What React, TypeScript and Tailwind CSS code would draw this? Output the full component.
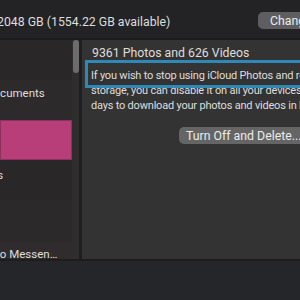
export default function App() {
  return (
    <div className="w-[300px] h-[300px] overflow-hidden bg-[#232326] text-[#dedede] font-['Roboto','Liberation_Sans',sans-serif] flex flex-col">
      {/* storage summary */}
      <div className="h-[38px] flex items-start shrink-0">
        <span className="mt-[14px] -ml-[3px] text-[12.3px] leading-4 whitespace-nowrap">2048 GB (1554.22 GB available)</span>
        <button className="mt-[12px] ml-auto -mr-[38px] w-[80px] shrink-0 h-[17px] pl-[12px] text-left rounded-[5px] bg-[#5e5e60] text-[12.3px] leading-4 text-[#ececec] whitespace-nowrap">
          Change...
        </button>
      </div>
      <div className="h-[2px] bg-[#1c1c1e] shrink-0" />

      {/* apps list + details */}
      <div className="h-[219px] flex shrink-0">
        <div className="w-[72px] shrink-0 flex flex-col bg-[#2a2729] text-[11.5px] leading-[14px] whitespace-nowrap overflow-hidden">
          <div className="h-[40px] shrink-0" />
          <div className="h-[40px] shrink-0 bg-[#2d2a2c] -ml-[14px] pt-[6px]">Documents</div>
          <div className="h-[40px] shrink-0 bg-[#b83e7a] border border-[#8c2f5d]" />
          <div className="h-[40px] shrink-0 -ml-[43px] pt-[8px]">Contacts</div>
          <div className="h-[42px] shrink-0 bg-[#2c292b]" />
          <div className="h-[17px] shrink-0 bg-[#302c2e] pt-[5px] overflow-hidden">
            <span className="block -ml-[24px]">Photo Messen…</span>
          </div>
        </div>
        <div className="w-[7px] shrink-0 bg-[#2f2d2e] pl-[1px]">
          <div className="h-[33px] rounded-full bg-[#6c6c6c]" />
        </div>
        <div className="w-[3px] shrink-0 bg-[#1f1f21]" />
        <div className="flex-1 bg-[#333333] relative pl-[10px] pt-[5px] whitespace-nowrap overflow-hidden">
          <div className="text-[12.3px] leading-4">9361 Photos and 626 Videos</div>
          <div className="mt-[8px] text-[11px] tracking-[-0.2px] leading-[14.75px] -ml-[1px]">
            <div>If you wish to stop using iCloud Photos and remove them</div>
            <div>storage, you can disable it on all your devices. You will</div>
            <div>days to download your photos and videos in high quality.</div>
          </div>
          <div className="absolute left-[3px] top-[20px] w-[260px] h-[28px] border-[3px] border-[#2f88b6]" />
          <button className="mt-[14px] ml-[87px] h-[17px] pl-[7px] pr-[10px] rounded-[5px] bg-[#656565] text-[12.3px] leading-4 text-[#ececec]">
            Turn Off and Delete...
          </button>
        </div>
      </div>
      <div className="h-[2px] bg-[#1d1d1f] shrink-0" />
      <div className="flex-1 bg-[#25262a]" />
    </div>
  );
}
